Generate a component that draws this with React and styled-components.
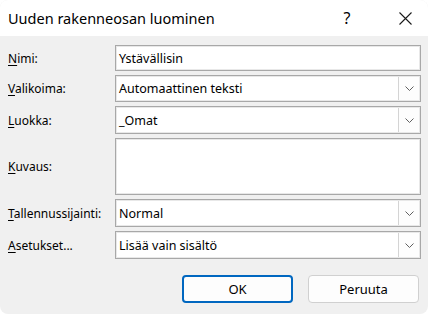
import * as React from 'react'
import styled, { createGlobalStyle } from 'styled-components'

const GlobalStyle = createGlobalStyle`
  html, body {
    margin: 0;
    padding: 0;
    background: #ffffff;
  }
  body {
    font-family: 'Noto Sans', 'Open Sans', sans-serif;
    color: #000;
  }
`

const Window = styled.div`
  width: 428px;
  height: 314px;
  background: #f0f0f0;
  border-radius: 8px;
  overflow: hidden;
  display: flex;
  flex-direction: column;
`

const TitleBar = styled.div`
  height: 36px;
  background: #ffffff;
  display: flex;
  align-items: center;
  padding-left: 8px;
  font-size: 14.5px;
  .filler {
    flex: 1;
  }
  .help {
    width: 46px;
    text-align: center;
    font-size: 16px;
    margin-right: 12px;
  }
  .close {
    width: 46px;
    display: flex;
    justify-content: center;
  }
`

const Form = styled.div`
  display: flex;
  flex-direction: column;
  gap: 4px;
  padding: 9px 7px 0 8px;
`

const Row = styled.div`
  display: flex;
  align-items: center;
  height: ${p => p.h}px;
`

const Label = styled.label`
  width: 107px;
  font-size: 12px;
  u {
    text-decoration: underline;
    text-underline-offset: 2px;
  }
`

const Field = styled.div`
  flex: 1;
  height: 100%;
  box-sizing: border-box;
  background: #ffffff;
  border: 1px solid #a8a8a8;
  box-shadow: inset 0 0 0 1px #e8e8e8;
  display: flex;
  align-items: center;
  font-size: 12.5px;
  padding-left: 3px;
  .value {
    flex: 1;
  }
`

const DropButton = styled.div`
  width: 21px;
  height: calc(100% - 2px);
  margin-right: 1px;
  box-sizing: border-box;
  border-left: 1px solid #d4d4d4;
  background: #fdfdfd;
  display: flex;
  align-items: center;
  justify-content: center;
`

const Buttons = styled.div`
  display: flex;
  justify-content: flex-end;
  gap: 15px;
  padding: 16px 9px 0 0;
`

const Button = styled.div`
  width: 111px;
  height: 28px;
  box-sizing: border-box;
  border-radius: 4px;
  background: #fdfdfd;
  border: ${p => (p.primary ? '2px solid #0067c0' : '1px solid #d0d0d0')};
  display: flex;
  align-items: center;
  justify-content: center;
  font-size: 13px;
`

const Chevron = () => (
  <svg width="9" height="5" viewBox="0 0 9 5">
    <path d="M0.5 0.5 L4.5 4.5 L8.5 0.5" fill="none" stroke="#606060" strokeWidth="1" />
  </svg>
)

const CloseIcon = () => (
  <svg width="13" height="13" viewBox="0 0 13 13">
    <path d="M0.5 0.5 L12.5 12.5 M12.5 0.5 L0.5 12.5" stroke="#1a1a1a" strokeWidth="1.1" />
  </svg>
)

const rows = [
  { key: 'N', rest: 'imi:', value: 'Ystävällisin', h: 26 },
  { key: 'V', rest: 'alikoima:', value: 'Automaattinen teksti', h: 27, drop: true },
  { key: 'L', rest: 'uokka:', value: '_Omat', h: 28, drop: true },
  { key: 'K', rest: 'uvaus:', value: '', h: 57 },
  { key: 'T', rest: 'allennussijainti:', value: 'Normal', h: 28, drop: true },
  { key: 'A', rest: 'setukset...', value: 'Lisää vain sisältö', h: 28, drop: true },
]

export default function App() {
  return (
    <>
      <GlobalStyle />
      <Window>
        <TitleBar>
          <span>Uuden rakenneosan luominen</span>
          <div className="filler" />
          <span className="help">?</span>
          <span className="close"><CloseIcon /></span>
        </TitleBar>
        <Form>
          {rows.map(r => (
            <Row key={r.key} h={r.h}>
              <Label><u>{r.key}</u>{r.rest}</Label>
              <Field>
                <span className="value">{r.value}</span>
                {r.drop && <DropButton><Chevron /></DropButton>}
              </Field>
            </Row>
          ))}
        </Form>
        <Buttons>
          <Button primary>OK</Button>
          <Button>Peruuta</Button>
        </Buttons>
      </Window>
    </>
  )
}
